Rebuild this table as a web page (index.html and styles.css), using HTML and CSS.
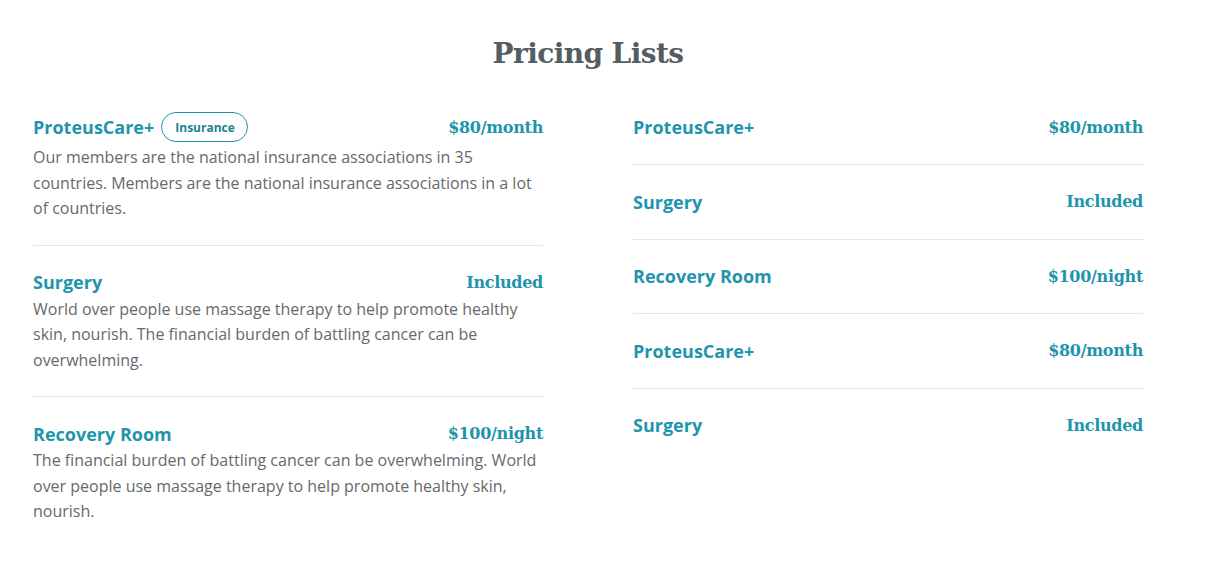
FILE: index.html
```html
<!DOCTYPE html>
<html lang="en">
<head>
<meta charset="utf-8">
<title>Pricing Lists</title>
<link rel="stylesheet" href="styles.css">
</head>
<body>
<section class="pricing">
  <h2 class="pricing-title">Pricing Lists</h2>
  <div class="pricing-grid">
    <div class="pricing-col">
      <div class="item">
        <div class="item-head with-badge">
          <div class="item-name">ProteusCare+ <span class="badge">Insurance</span></div>
          <div class="item-price">$80/month</div>
        </div>
        <p class="item-desc">Our members are the national insurance associations in 35 countries. Members are the national insurance associations in a lot of countries.</p>
      </div>
      <div class="item">
        <div class="item-head">
          <div class="item-name">Surgery</div>
          <div class="item-price">Included</div>
        </div>
        <p class="item-desc">World over people use massage therapy to help promote healthy skin, nourish. The financial burden of battling cancer can be overwhelming.</p>
      </div>
      <div class="item">
        <div class="item-head">
          <div class="item-name">Recovery Room</div>
          <div class="item-price">$100/night</div>
        </div>
        <p class="item-desc">The financial burden of battling cancer can be overwhelming. World over people use massage therapy to help promote healthy skin, nourish.</p>
      </div>
    </div>
    <div class="pricing-col compact-col">
      <div class="item compact">
        <div class="item-head">
          <div class="item-name">ProteusCare+</div>
          <div class="item-price">$80/month</div>
        </div>
      </div>
      <div class="item compact">
        <div class="item-head">
          <div class="item-name">Surgery</div>
          <div class="item-price">Included</div>
        </div>
      </div>
      <div class="item compact">
        <div class="item-head">
          <div class="item-name">Recovery Room</div>
          <div class="item-price">$100/night</div>
        </div>
      </div>
      <div class="item compact">
        <div class="item-head">
          <div class="item-name">ProteusCare+</div>
          <div class="item-price">$80/month</div>
        </div>
      </div>
      <div class="item compact">
        <div class="item-head">
          <div class="item-name">Surgery</div>
          <div class="item-price">Included</div>
        </div>
      </div>
    </div>
  </div>
</section>
</body>
</html>
```
FILE: styles.css
```css
* { box-sizing: border-box; }
html, body { margin: 0; padding: 0; background: #fff; }
body {
  font-family: "Open Sans", "Liberation Sans", sans-serif;
  color: #67696b;
  font-size: 16px;
}
.pricing {
  width: 1110px;
  margin-left: 33px;
  padding-top: 33px;
}
.pricing-title {
  margin: 0 0 35px;
  text-align: center;
  font-family: "DejaVu Serif", serif;
  font-weight: bold;
  font-size: 28px;
  line-height: 42px;
  color: #535d62;
  letter-spacing: -0.6px;
}
.pricing-grid {
  display: grid;
  grid-template-columns: 510px 510px;
  column-gap: 90px;
  align-items: start;
}
.item {
  padding: 23px 0 23px;
  border-bottom: 1px solid #e4e6e8;
}
.item:first-child { padding-top: 0; }
.item:last-child { border-bottom: none; }
.item-head {
  display: flex;
  justify-content: space-between;
  align-items: center;
  height: 27px;
}
.item-head.with-badge { height: 34px; }
.item-name {
  display: flex;
  align-items: center;
  gap: 7px;
  font-weight: 700;
  font-size: 18px;
  color: #1f94ad;
}
.badge {
  display: inline-flex;
  align-items: center;
  height: 30px;
  padding: 0 12px 0 13px;
  border: 1px solid #1f94ad;
  border-radius: 15px;
  font-size: 12px;
  font-weight: 700;
  color: #237f92;
}
.item-price {
  font-family: "DejaVu Serif", serif;
  font-weight: bold;
  font-size: 16px;
  color: #1f94ad;
  letter-spacing: -0.3px;
}
.item-desc {
  margin: 1px 0 0;
  line-height: 25.5px;
}
.compact-col { padding-top: 3.5px; }
.compact { padding-top: 23px; padding-bottom: 23.5px; }
.compact:first-child { padding-top: 0; }
```
